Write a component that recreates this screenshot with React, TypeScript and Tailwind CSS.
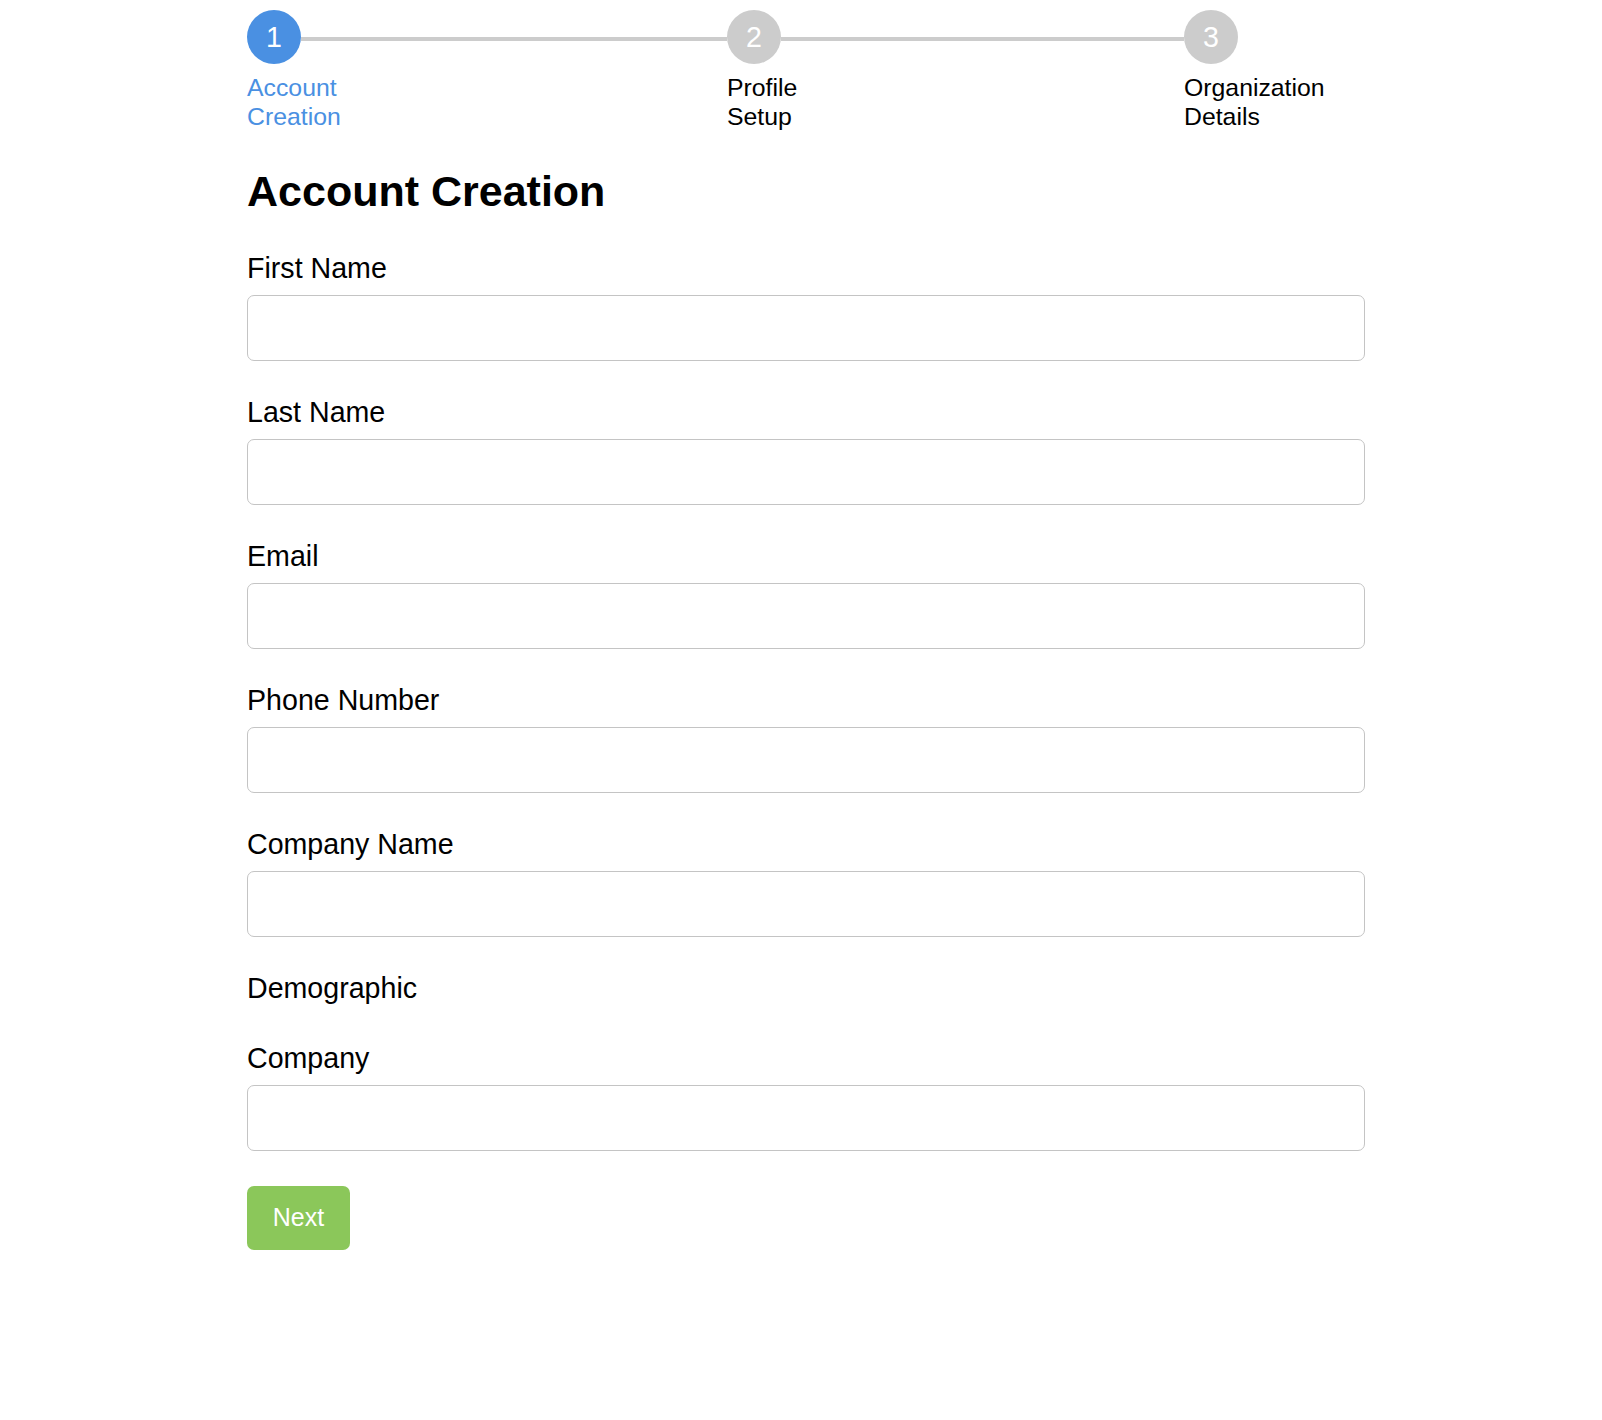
import React from "react";

const steps = [
  { n: 1, label: "Account Creation", active: true },
  { n: 2, label: "Profile Setup", active: false },
  { n: 3, label: "Organization Details", active: false },
];

const fields = ["First Name", "Last Name", "Email", "Phone Number", "Company Name"];

const Field: React.FC<{ label: string }> = ({ label }) => (
  <div className="mb-[35px]">
    <label className="block text-[28.6px] leading-[33px] text-black">{label}</label>
    <input
      type="text"
      className="mt-[10px] block h-[66px] w-full rounded-[7px] border border-[#c4c4c4] bg-white px-3 outline-none"
    />
  </div>
);

const Stepper: React.FC = () => {
  return (
    <div className="grid grid-cols-[54px_426px_54px_403px_54px] pt-[10px]">
      {steps.map((s, i) => (
        <React.Fragment key={s.n}>
          <div
            className={
              s.active
                ? "flex h-[54px] w-[54px] items-center justify-center rounded-full bg-[#4a90e2] text-[28.6px] text-white"
                : "flex h-[54px] w-[54px] items-center justify-center rounded-full bg-[#cccccc] text-[28.6px] text-white"
            }
          >
            {s.n}
          </div>
          {i < steps.length - 1 && <div className="mt-[27px] h-[4px] bg-[#cccccc]" />}
        </React.Fragment>
      ))}
      <div className="col-start-1 mt-[9px] text-[24.8px] leading-[29px] text-[#4a90e2]">
        {steps[0].label}
      </div>
      <div className="col-start-3 mt-[9px] text-[24.8px] leading-[29px] text-black">
        {steps[1].label}
      </div>
      <div className="col-start-5 mt-[9px] text-[24.8px] leading-[29px] text-black">
        {steps[2].label}
      </div>
    </div>
  );
};

const App: React.FC = () => {
  return (
    <div
      className="min-h-[1420px] bg-white"
      style={{ fontFamily: '"Liberation Sans", Arial, sans-serif' }}
    >
      <div className="ml-[247px] w-[1118px]">
        <Stepper />
        <h2 className="mt-[36px] text-[43px] font-bold leading-[49px] text-black">
          Account Creation
        </h2>
        <form className="mt-[36px]" onSubmit={(e) => e.preventDefault()}>
          {fields.map((f) => (
            <Field key={f} label={f} />
          ))}
          <div className="mb-[37px] text-[28.6px] leading-[33px] text-black">Demographic</div>
          <Field label="Company" />
          <button
            type="submit"
            className="h-[64px] w-[103px] rounded-[7px] bg-[#8bc75a] text-[25px] text-white"
          >
            Next
          </button>
        </form>
      </div>
    </div>
  );
};

export default App;
